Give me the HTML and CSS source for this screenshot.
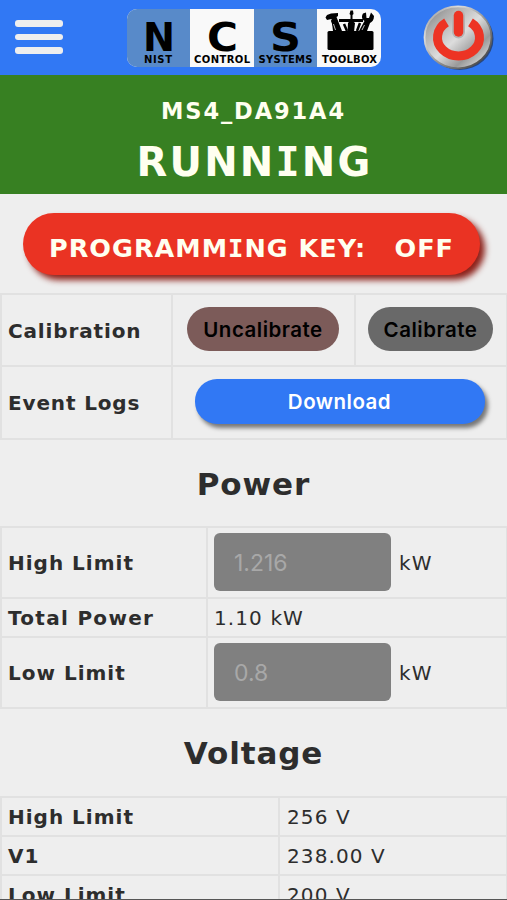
FILE: index.html
```html
<!DOCTYPE html>
<html lang="en">
<head>
<meta charset="utf-8">
<title>NIST Control Systems Toolbox</title>
<link rel="stylesheet" href="styles.css">
</head>
<body>
<header class="topbar">
  <div class="menu"><span></span><span></span><span></span></div>
  <svg class="logo" width="254" height="58" viewBox="0 0 254 58">
    <defs><clipPath id="round"><rect width="254" height="58" rx="10"/></clipPath></defs>
    <g clip-path="url(#round)">
      <rect width="254" height="58" fill="#f9f9f9"/>
      <rect width="63" height="58" fill="#588ac9"/>
      <rect x="127" width="63" height="58" fill="#588ac9"/>
    </g>
    <g class="big">
      <text x="16" y="41.500" textLength="32" lengthAdjust="spacingAndGlyphs">N</text>
      <text x="80" y="41.500" textLength="31" lengthAdjust="spacingAndGlyphs">C</text>
      <text x="143" y="41.500" textLength="31" lengthAdjust="spacingAndGlyphs">S</text>
    </g>
    <g class="small">
      <text x="17" y="54" textLength="28">NIST</text>
      <text x="67" y="54" textLength="56">CONTROL</text>
      <text x="131.500" y="54" textLength="54">SYSTEMS</text>
      <text x="195" y="54" textLength="55">TOOLBOX</text>
    </g>
    <g>
      <rect x="200.500" y="22" width="46" height="19" rx="1.500"/>
      <path d="M212 10H236V13H212z"/>
      <path d="M198.500 8.500L200 6L204 4.500L211 4L211 7L209.500 8L215 22H206L204.500 10L200 11z"/>
      <path d="M223.500 1.500H226L226.500 5L225.500 6V12L228 14L227 23H220.500L221 14L223.500 11V6L222.500 5z"/>
      <path d="M236 4.500L239 3.500L239.500 9L242 9L244 3.500L247 7C247 11 245 13 243 14L240 22H232L237.500 12C234.500 10 234.500 7 236 4.500z"/>
      <path d="M205 11L209 22M217 15L220 22M233 14L230 22" fill="none" stroke="#000" stroke-width="2.500"/>
      <path d="M206.500 15L208.500 21M237.500 16L235 21" stroke="#eee" stroke-width=".8"/>
    </g>
  </svg>
  <svg class="power" width="74" height="70" viewBox="0 0 74 70">
    <defs>
      <linearGradient id="metal" x1="0" y1="0" x2="1" y2="1">
        <stop offset="0" stop-color="#777"/><stop offset=".22" stop-color="#aaa"/>
        <stop offset=".5" stop-color="#ddd"/><stop offset=".72" stop-color="#999"/>
        <stop offset=".86" stop-color="#ccc"/><stop offset="1" stop-color="#555"/>
      </linearGradient>
      <linearGradient id="rim" x1="0" y1="0" x2="1" y2="1">
        <stop offset="0" stop-color="#777"/><stop offset=".25" stop-color="#ddd"/>
        <stop offset=".6" stop-color="#888"/><stop offset="1" stop-color="#333"/>
      </linearGradient>
    </defs>
    <ellipse cx="38.500" cy="35.700" rx="34" ry="31.300" fill="#29477e"/>
    <ellipse cx="37" cy="34.300" rx="33.500" ry="31" fill="url(#metal)" stroke="url(#rim)" stroke-width="1.800"/>
    <path d="M25.500 19.300A21 18.500 0 1 0 49.500 19.300" fill="none" stroke="#ed3424" stroke-width="9"/>
    <path d="M37.500 12.500V29" stroke="#b5b5b5" stroke-width="13" stroke-linecap="round"/>
    <path d="M37.500 12.500V29" stroke="#ed3424" stroke-width="9.500" stroke-linecap="round"/>
  </svg>
</header>
<section class="status">
  <div class="device">MS4_DA91A4</div>
  <div class="state">RUNN<span class="slab">I</span>NG</div>
</section>
<div class="key"><span>PROGRAMM<span class="slab">I</span>NG KEY:</span><span>OFF</span></div>
<section class="grid actions">
  <div class="cell name">Calibration</div>
  <div class="cell mid"><button class="pill uncal">Uncalibrate</button></div>
  <div class="cell mid"><button class="pill cal">Calibrate</button></div>
  <div class="cell name">Event Logs</div>
  <div class="cell mid wide"><button class="pill download">Download</button></div>
</section>
<h2 class="h-power">Power</h2>
<section class="grid powers">
  <div class="cell name">High Limit</div>
  <div class="cell"><span class="field">1.216</span><span class="unit">kW</span></div>
  <div class="cell name">Total Power</div>
  <div class="cell">1.10 kW</div>
  <div class="cell name">Low Limit</div>
  <div class="cell"><span class="field">0.8</span><span class="unit">kW</span></div>
</section>
<h2 class="h-volt">Voltage</h2>
<section class="grid volts">
  <div class="cell name">High Limit</div><div class="cell">256 V</div>
  <div class="cell name">V1</div><div class="cell">238.00 V</div>
  <div class="cell name">Low Limit</div><div class="cell">200 V</div>
</section>
</body>
</html>
```

FILE: styles.css
```css
* { box-sizing: border-box; }
body {
  margin: 0;
  height: 900px;
  overflow: hidden;
  display: flex;
  flex-direction: column;
  background: #eee;
  border-bottom: 1px solid #555;
  color: #2d2d2d;
  font: 20px "DejaVu Sans", Verdana, sans-serif;
}
body > * { flex-shrink: 0; }
.topbar {
  height: 75px;
  background: #3178f4;
  display: flex;
  align-items: flex-start;
}
.menu {
  width: 48px;
  margin: 20px 64px 0 15px;
  display: flex;
  flex-direction: column;
  gap: 7px;
}
.menu span { height: 6.600px; border-radius: 3px; background: #eee; }
.logo { margin-top: 9px; }
.power { margin: 3px 0 0 40px; }
.big { font: bold 39.500px "DejaVu Sans", sans-serif; }
.small { font: bold 10px "DejaVu Sans", sans-serif; }
.slab { font-family: "DejaVu Sans Mono", monospace; }
.status {
  height: 119px;
  background: #378022;
  color: #fffff0;
  font-weight: bold;
  text-align: center;
}
.device { font-size: 22.500px; letter-spacing: 1.900px; line-height: 26px; margin-top: 23px; }
.state { font-size: 40px; letter-spacing: 2.200px; line-height: 46px; margin-top: 15px; padding-left: 2px; }
.key {
  width: 457px;
  height: 62px;
  margin: 19px 0 0 23px;
  padding: 8px 26px 0;
  border-radius: 31px;
  background: #ea3323;
  box-shadow: 5px 5px 6px #8d211a;
  color: #fffff0;
  font-size: 25.500px;
  font-weight: bold;
  line-height: 54px;
  letter-spacing: 1px;
  display: flex;
  justify-content: space-between;
  white-space: nowrap;
}
.grid {
  display: grid;
  gap: 2px;
  padding: 2px 1px 2px 2px;
  background: #e1e1e1;
}
.cell {
  background: #eee;
  display: flex;
  align-items: center;
  padding: 0 6px;
  letter-spacing: 1.100px;
}
.name { font-weight: bold; letter-spacing: .85px; }
.powers .name, .volts .name { letter-spacing: 1px; }
.mid { justify-content: center; }
.wide { grid-column: span 2; }
.actions {
  margin-top: 18px;
  grid-template-columns: 169px 181px 1fr;
  grid-template-rows: 70px 71px;
}
.actions .name { padding-top: 1px; }
.pill {
  height: 44px;
  border: 0;
  padding: 0;
  border-radius: 22px;
  font: 600 20.500px Inter, sans-serif;
  letter-spacing: .5px;
  color: #000;
  margin-bottom: 2px;
  white-space: nowrap;
}
.uncal { width: 152px; background: #7c5b59; margin-right: 1px; }
.cal { width: 125px; background: #696969; margin-right: 1px; }
.download {
  width: 290px;
  height: 45px;
  color: #fff;
  background: #3178f4;
  box-shadow: 3px 4px 4px #777;
}
h2 { margin: 0; font-size: 31px; line-height: 36px; text-align: center; letter-spacing: .9px; }
.h-power { margin-top: 26px; }
.powers {
  margin-top: 24px;
  grid-template-columns: 204px 1fr;
  grid-template-rows: 69px 37px 69px;
}
.powers .name:nth-child(3) { letter-spacing: 1.300px; }
.field {
  width: 177px;
  height: 58px;
  margin-top: -1px;
  padding-left: 20px;
  border-radius: 6px;
  background: #808080;
  color: #a8a8a8;
  font: 23px/60px Inter, sans-serif;
  letter-spacing: 0;
}
.unit { margin-left: 8px; }
.h-volt { margin-top: 26px; }
.volts {
  margin-top: 25px;
  grid-template-columns: 276px 1fr;
  grid-template-rows: 37px 37px 37px;
}
.volts .cell:nth-child(even) { padding-left: 7px; }
```
